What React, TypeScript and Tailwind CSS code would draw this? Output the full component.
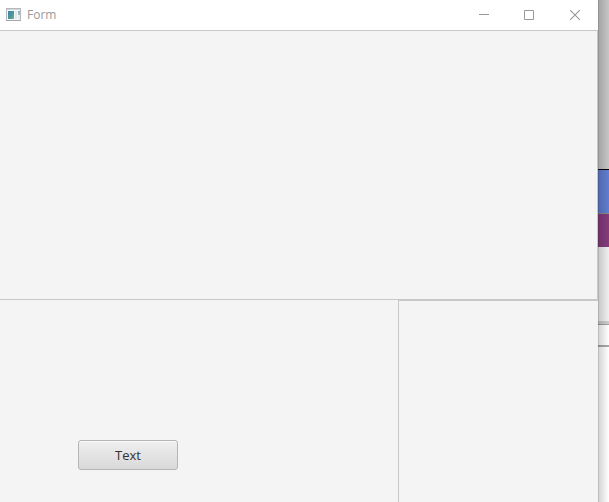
function AppIcon() {
  return (
    <svg width="16" height="14" viewBox="0 0 16 14" className="shrink-0" aria-hidden="true">
      <defs>
        <linearGradient id="screen" x1="0" y1="0" x2="1" y2="1">
          <stop offset="0" stopColor="#4480b4" />
          <stop offset="0.6" stopColor="#4a9a94" />
          <stop offset="1" stopColor="#74b884" />
        </linearGradient>
        <linearGradient id="side" x1="0" y1="0" x2="0" y2="1">
          <stop offset="0" stopColor="#7fa9c8" />
          <stop offset="1" stopColor="#a5cdb5" />
        </linearGradient>
      </defs>
      <rect x="0.5" y="0.5" width="14" height="12" fill="#f7f7f7" stroke="#b4b8bc" />
      <path d="M1 1.5h13" stroke="#d3d6d9" />
      <path d="M0 12.5h15" stroke="#a2a6aa" />
      <rect x="2" y="3" width="6" height="8" fill="url(#screen)" />
      <rect x="9" y="3" width="2" height="8" fill="#e2e7ec" />
      <rect x="12" y="3" width="2" height="4" fill="url(#side)" />
      <rect x="12" y="7" width="2" height="4" fill="#e8ebeb" />
    </svg>
  );
}

function TitleBar() {
  return (
    <header className="flex h-[30px] items-center justify-between bg-white pl-1.5 text-[#999999]">
      <div className="flex items-center gap-[5px]">
        <AppIcon />
        <h1 className="text-[12px] leading-4">Form</h1>
      </div>
      <div className="flex h-full">
        <button type="button" aria-label="Minimize" className="flex w-[45px] items-center justify-center">
          <svg width="10" height="10" viewBox="0 0 10 10" stroke="currentColor">
            <path d="M0 4.5h10" />
          </svg>
        </button>
        <button type="button" aria-label="Maximize" className="flex w-[46px] items-center justify-center">
          <svg width="10" height="10" viewBox="0 0 10 10" fill="none" stroke="currentColor">
            <path d="M0.5 0.5h9v9h-9z" />
          </svg>
        </button>
        <button type="button" aria-label="Close" className="flex w-[46px] items-center justify-center">
          <svg width="10" height="10" viewBox="0 0 10 10" stroke="currentColor" strokeWidth="1.1">
            <path d="M0 0l10 10M10 0L0 10" />
          </svg>
        </button>
      </div>
    </header>
  );
}

// Whatever is open behind the form, seen past its right edge
function Backdrop() {
  return (
    <div className="relative flex w-[11px] shrink-0 flex-col bg-white" aria-hidden="true">
      <div className="h-[169px] bg-[#c6c6c6]" />
      <div className="h-[44px] border-t border-black bg-[#607dd0]" />
      <div className="h-[34px] border-t border-[#8a8a8a] bg-[#843b7c]" />
      <div className="h-[74px] bg-[#f0f0f0]" />
      <div className="h-1 border-b border-[#a3a3a3] bg-[#cccccc]" />
      <div className="h-[22px] border-b-2 border-[#a8a8a8]" />
      {/* Window edge and shadow */}
      <div className="absolute inset-0 border-l border-black/25 bg-linear-to-r from-black/16 to-transparent" />
    </div>
  );
}

export default function App() {
  return (
    <div className="flex min-h-screen font-['Open_Sans','Noto_Sans',sans-serif]">
      <div className="flex min-w-0 flex-1 flex-col bg-[#f4f4f4]">
        <TitleBar />
        <main className="flex flex-1 flex-col">
          <section className="min-h-[270px] border-y border-r border-[#c8c8c8]" />
          <div className="flex flex-1">
            <section className="flex flex-1 items-end px-[78px] pb-8">
              <button
                type="button"
                className="h-[30px] w-[100px] rounded-[3px] border border-[#b5b5b5] bg-linear-to-b from-[#efefef] to-[#d9d9d9] text-[13px] leading-5 text-[#333333] shadow-[inset_0_1px_0_#fafafa]"
              >
                Text
              </button>
            </section>
            <section className="w-[200px] border-t border-l border-[#c8c8c8]" />
          </div>
        </main>
      </div>
      <Backdrop />
    </div>
  );
}
